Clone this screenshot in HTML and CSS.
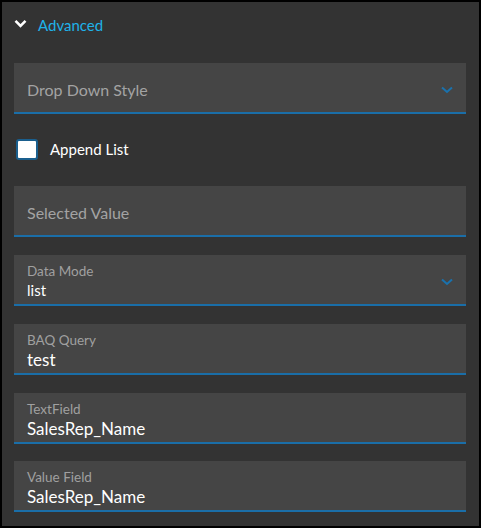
FILE: index.html
```html
<!DOCTYPE html>
<html>
<head>
<meta charset="utf-8">
<link rel="stylesheet" href="styles.css">
</head>
<body>
<div class="panel">
  <div class="header">
    <svg class="hchev" width="13" height="9" viewBox="0 0 13 9"><path d="M1.5 1.8 L6.5 6.8 L11.5 1.8" fill="none" stroke="#ffffff" stroke-width="2.6"/></svg>
    <span class="htitle">Advanced</span>
  </div>
  <div class="field select">
    <span class="placeholder">Drop Down Style</span>
    <svg class="chev" width="12" height="8" viewBox="0 0 12 8"><path d="M1 1.5 L6 6 L11 1.5" fill="none" stroke="#1a72ad" stroke-width="2"/></svg>
  </div>
  <label class="check">
    <span class="box"></span>
    <span class="check-label">Append List</span>
  </label>
  <div class="field">
    <span class="placeholder">Selected Value</span>
  </div>
  <div class="field select labeled">
    <span class="label">Data Mode</span>
    <span class="value small">list</span>
    <svg class="chev" width="12" height="8" viewBox="0 0 12 8"><path d="M1 1.5 L6 6 L11 1.5" fill="none" stroke="#1a72ad" stroke-width="2"/></svg>
  </div>
  <div class="field labeled">
    <span class="label">BAQ Query</span>
    <span class="value">test</span>
  </div>
  <div class="field labeled">
    <span class="label">TextField</span>
    <span class="value">SalesRep_Name</span>
  </div>
  <div class="field labeled last">
    <span class="label">Value Field</span>
    <span class="value">SalesRep_Name</span>
  </div>
</div>
</body>
</html>
```
FILE: styles.css
```css
html, body {
  margin: 0;
  padding: 0;
  background: #000;
}
.panel {
  box-sizing: border-box;
  width: 481px;
  height: 528px;
  border: 2px solid #000;
  background: #333333;
  padding: 0 13px 0 12px;
  font-family: "Source Sans Pro", Lato, "Open Sans", sans-serif;
  display: flex;
  flex-direction: column;
}
.header {
  height: 46px;
  display: flex;
  align-items: center;
  padding-left: 0;
}
.hchev {
  display: block;
  margin-right: 11px;
  margin-top: -3px;
}
.htitle {
  color: #1fb2e8;
  font-size: 15px;
}
.field {
  box-sizing: border-box;
  height: 51px;
  background: #454545;
  border-bottom: 2px solid #1a6ea8;
  padding-left: 13px;
  display: flex;
  flex-direction: column;
  justify-content: center;
  position: relative;
  margin-top: 15px;
}
.field + .field {
  margin-top: 18px;
}
.field.last {
  margin-top: 17px;
}
.placeholder {
  color: #a3a3a3;
  font-size: 16px;
  margin-top: 3px;
}
.chev {
  position: absolute;
  right: 13px;
  top: 23px;
}
.labeled {
  justify-content: flex-start;
  padding-top: 7px;
}
.label {
  color: #a0a0a0;
  font-size: 13.5px;
  line-height: 18px;
}
.value {
  color: #ffffff;
  font-size: 17px;
  line-height: 21px;
}
.value.small {
  font-size: 15px;
  line-height: 20px;
}
.check {
  display: flex;
  align-items: center;
  height: 22px;
  margin-top: 24px;
  margin-bottom: 11px;
  padding-left: 2px;
}
.box {
  box-sizing: border-box;
  width: 22px;
  height: 21px;
  border: 2px solid #1a5f8e;
  border-radius: 3px;
  background: #fff;
  margin-right: 12px;
}
.check-label {
  color: #fff;
  font-size: 15px;
}
```
